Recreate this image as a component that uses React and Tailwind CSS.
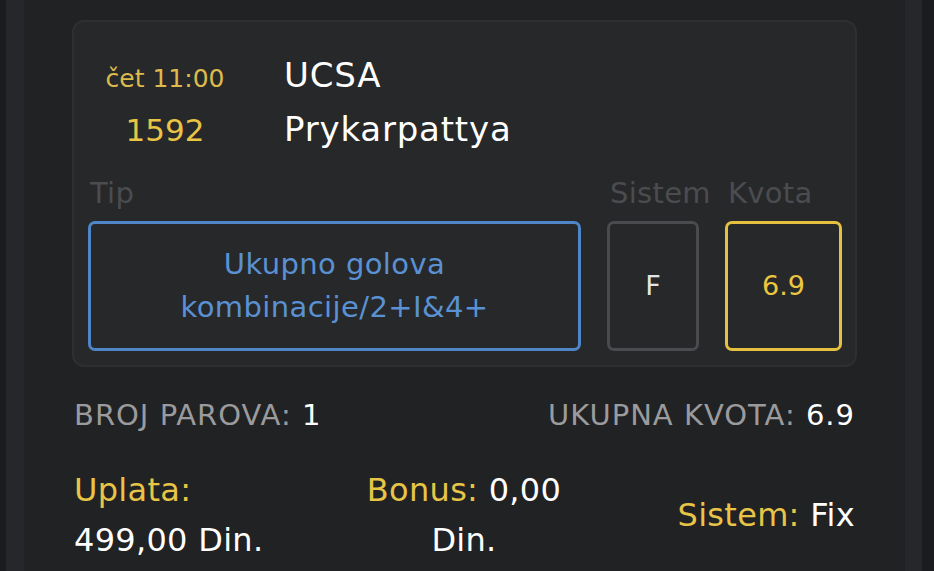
import React from 'react';

const FONT = { fontFamily: '"DejaVu Sans", "Inter", sans-serif' };

export default function App() {
  return (
    <div className="flex h-[571px] w-full overflow-hidden bg-[#1b1c1f]" style={FONT}>
      <div className="w-[6px] shrink-0 bg-[#1b1c1f]" />
      <div className="w-[18px] shrink-0 bg-[#26272a]" />
      <div className="flex-1 bg-[#212224] px-[48px] pt-[20px]">
        {/* match card */}
        <div className="h-[347px] rounded-[12px] border-2 border-[#2e2f32] bg-[#27282a] pl-[14px] pr-[13px] pt-[26px]">
          <div className="flex h-[54px] items-baseline overflow-visible">
            <div className="w-[154px] text-center text-[25px] leading-[54px] text-[#dcbb4c]">čet 11:00</div>
            <div className="pl-[42px] text-[34px] leading-[54px] tracking-[0.8px] text-white">UCSA</div>
          </div>
          <div className="flex h-[54px] items-baseline overflow-visible">
            <div className="w-[154px] text-center text-[31px] leading-[54px] text-[#e9c445]">1592</div>
            <div className="pl-[42px] text-[34px] leading-[54px] tracking-[0.8px] text-white">Prykarpattya</div>
          </div>

          <div className="mt-[19px] flex text-[29px] leading-[36px] tracking-[0.3px] text-[#4b4c4f]">
            <div className="flex-1 pl-[2px]">Tip</div>
            <div className="w-[92px] whitespace-nowrap pl-[3px]">Sistem</div>
            <div className="ml-[26px] w-[117px] pl-[3px]">Kvota</div>
          </div>

          <div className="mt-[10px] flex h-[130px] gap-[26px]">
            <div className="flex flex-1 items-center justify-center rounded-[7px] border-[3px] border-[#4f86c7] px-2 text-center text-[29px] leading-[43px] tracking-[0.4px] text-[#5a91d3]">
              Ukupno golova
              <br />
              kombinacije/2+I&amp;4+
            </div>
            <div className="flex w-[92px] items-center justify-center rounded-[7px] border-[3px] border-[#4a4b4e] text-[27px] text-[#e4e4e4]">
              F
            </div>
            <div className="flex w-[117px] items-center justify-center rounded-[7px] border-[3px] border-[#e6c140] text-[27px] text-[#ecc63f]">
              6.9
            </div>
          </div>
        </div>

        {/* summary */}
        <div className="mt-[30px] flex items-baseline justify-between px-[2px] text-[29px] leading-[36px] tracking-[1px]">
          <div className="text-[#9b9b9d]">
            BROJ PAROVA: <span className="text-white">1</span>
          </div>
          <div className="text-[#9b9b9d]">
            UKUPNA KVOTA: <span className="text-white">6.9</span>
          </div>
        </div>

        <div className="mt-[32px] flex items-center px-[2px] text-[32px] leading-[50px] tracking-[0.3px]">
          <div className="w-[290px]">
            <div className="text-[#e8c447]">Uplata:</div>
            <div className="text-white">499,00 Din.</div>
          </div>
          <div className="w-[200px] text-center">
            <div>
              <span className="text-[#e8c447]">Bonus:</span> <span className="text-white">0,00</span>
            </div>
            <div className="text-white">Din.</div>
          </div>
          <div className="flex-1 text-right">
            <span className="text-[#e8c447]">Sistem:</span> <span className="text-white">Fix</span>
          </div>
        </div>
      </div>
      <div className="w-[17px] shrink-0 bg-[#26272a]" />
      <div className="w-[12px] shrink-0 bg-[#1b1c1f]" />
    </div>
  );
}
